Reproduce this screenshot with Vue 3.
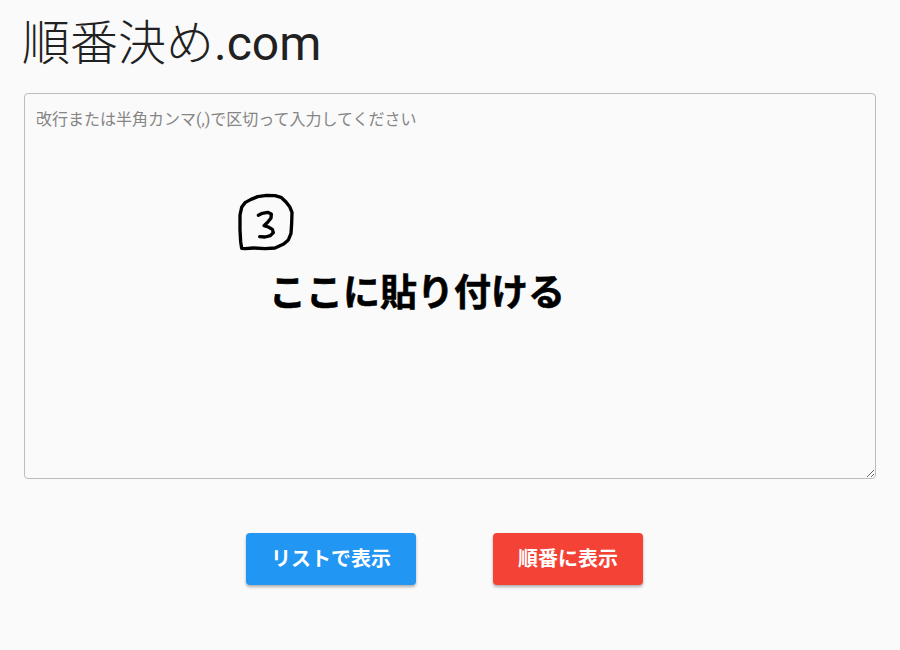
<script setup>
const placeholder = '改行または半角カンマ(,)で区切って入力してください'
</script>

<template>
  <div class="page">
    <h1 class="title">順番決め<span class="domain">.com</span></h1>
    <div class="input-wrap">
      <textarea class="names" :placeholder="placeholder"></textarea>
      <svg class="step-mark" viewBox="0 0 300 240" aria-hidden="true">
        <path
          d="M50 205 L47 185 L45 150 L45 105 L50 82 L60 68 L78 58 L98 50 L125 46 L150 47 L168 52 L183 66 L194 80 L201 97 L200 130 L198 160 L190 180 L176 192 L150 204 L120 206 L85 204 L60 206 Z"
        />
        <path d="M100 106 L112 100 L128 97 L139 102 L138 114 L128 127 L117 137 L130 141 L142 148 L145 158 L136 167 L120 171 L104 170" />
      </svg>
      <div class="paste-note">ここに貼り付ける</div>
    </div>
    <div class="actions">
      <button class="btn btn-list">リストで表示</button>
      <button class="btn btn-order">順番に表示</button>
    </div>
  </div>
</template>

<style scoped>
.page {
  width: 900px;
  height: 650px;
  box-sizing: border-box;
  padding: 0 24px;
  background: #fafafa;
  font-family: Roboto, "Noto Sans CJK JP", sans-serif;
  overflow: hidden;
}

.title {
  margin: 0 0 0 -2px;
  height: 93px;
  padding-top: 12px;
  box-sizing: border-box;
  font-size: 48px;
  line-height: 64px;
  font-weight: 300;
  color: #212121;
}

.domain {
  font-weight: 400;
}

.input-wrap {
  position: relative;
  height: 386px;
}

.names {
  display: block;
  width: 100%;
  height: 100%;
  box-sizing: border-box;
  padding: 15px 11px;
  border: 1px solid #bdbdbd;
  border-radius: 4px;
  background: transparent;
  font-family: inherit;
  font-size: 16px;
  line-height: 22px;
  outline: none;
}

.names::placeholder {
  color: #858585;
}

.step-mark {
  position: absolute;
  left: 201px;
  top: 87px;
  width: 100px;
  height: 80px;
  fill: none;
  stroke: #000;
  stroke-width: 10;
  stroke-linecap: round;
  stroke-linejoin: round;
  pointer-events: none;
}

.paste-note {
  position: absolute;
  left: 245px;
  top: 176px;
  font-size: 37px;
  line-height: 50px;
  font-weight: 700;
  color: #000;
  -webkit-text-stroke: 0.6px #000;
  white-space: nowrap;
  pointer-events: none;
}

.actions {
  display: flex;
  justify-content: center;
  gap: 77px;
  margin-top: 54px;
  padding-right: 11px;
}

.btn {
  height: 52px;
  padding: 0 25px 4px;
  border: none;
  border-radius: 4px;
  color: #fff;
  font-family: inherit;
  font-size: 20px;
  font-weight: 700;
  white-space: nowrap;
  cursor: pointer;
  box-shadow: 0 2px 3px rgba(0, 0, 0, 0.3);
}

.btn-list {
  background: #2196f3;
}

.btn-order {
  background: #f44336;
}
</style>
